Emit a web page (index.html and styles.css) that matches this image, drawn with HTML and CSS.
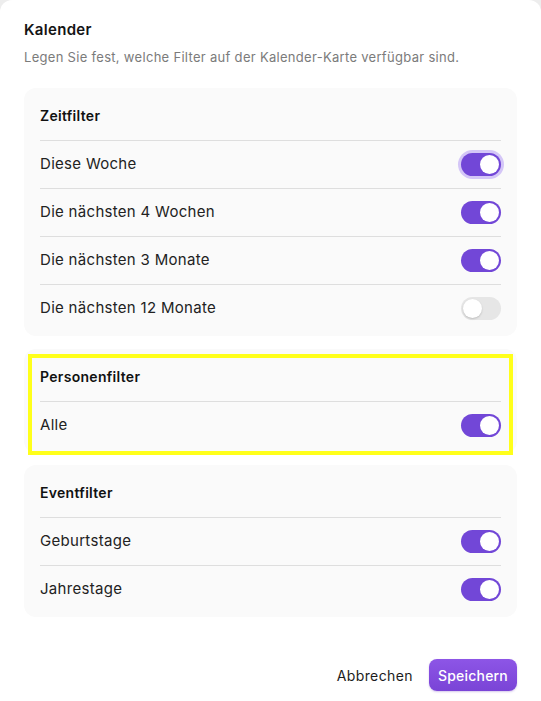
FILE: index.html
```html
<!DOCTYPE html>
<html lang="de">
<head>
<meta charset="utf-8">
<title>Kalender</title>
<link rel="stylesheet" href="styles.css">
</head>
<body>
<div class="dialog">
  <h1 class="title">Kalender</h1>
  <p class="subtitle">Legen Sie fest, welche Filter auf der Kalender-Karte verfügbar sind.</p>

  <div class="sections">
    <section class="card">
      <h2 class="card-title">Zeitfilter</h2>
      <div class="row"><span>Diese Woche</span><span class="toggle on focus"></span></div>
      <div class="row"><span>Die nächsten 4 Wochen</span><span class="toggle on"></span></div>
      <div class="row"><span>Die nächsten 3 Monate</span><span class="toggle on"></span></div>
      <div class="row"><span>Die nächsten 12 Monate</span><span class="toggle"></span></div>
    </section>

    <section class="card highlighted">
      <h2 class="card-title">Personenfilter</h2>
      <div class="row"><span>Alle</span><span class="toggle on"></span></div>
    </section>

    <section class="card">
      <h2 class="card-title">Eventfilter</h2>
      <div class="row"><span>Geburtstage</span><span class="toggle on"></span></div>
      <div class="row"><span>Jahrestage</span><span class="toggle on"></span></div>
    </section>
  </div>

  <div class="footer">
    <button class="btn btn-ghost">Abbrechen</button>
    <button class="btn btn-primary">Speichern</button>
  </div>
</div>
</body>
</html>
```

FILE: styles.css
```css
* { box-sizing: border-box; }

html, body {
  margin: 0;
  padding: 0;
  background: #ededed;
}

body {
  font-family: Inter, "Noto Sans", "Liberation Sans", sans-serif;
  color: #1c1c1c;
  letter-spacing: 0.3px;
}

.dialog {
  background: #ffffff;
  border-radius: 12px;
  min-height: 760px;
  padding: 20px 24px 24px;
}

.title {
  margin: 0;
  font-size: 15px;
  line-height: 20px;
  font-weight: 600;
  color: #141414;
}

.subtitle {
  margin: 7px 0 0;
  font-size: 13px;
  line-height: 20px;
  color: #7b7b7b;
}

.sections {
  margin-top: 21px;
  display: flex;
  flex-direction: column;
  gap: 12px;
}

.card {
  background: #fafafa;
  border-radius: 12px;
  padding: 4px 16px;
}

.card.highlighted {
  position: relative;
  margin-top: 1px;
}

.card.highlighted::after {
  content: "";
  position: absolute;
  left: 4px;
  right: 4px;
  top: 5px;
  bottom: -2px;
  border: 4px solid #ffff1a;
  pointer-events: none;
}

.card-title {
  margin: 0;
  height: 48px;
  padding-bottom: 2px;
  display: flex;
  align-items: center;
  font-size: 14px;
  font-weight: 600;
  color: #111;
}

.row {
  height: 48px;
  border-top: 1px solid #dedede;
  display: flex;
  align-items: center;
  justify-content: space-between;
  font-size: 15px;
  color: #222;
}

.row > span:first-child {
  padding-bottom: 3px;
}

.toggle {
  position: relative;
  width: 40px;
  height: 23px;
  border-radius: 12px;
  background: #e6e6e6;
  flex: none;
}

.toggle::after {
  content: "";
  position: absolute;
  top: 2px;
  left: 2px;
  width: 19px;
  height: 19px;
  border-radius: 50%;
  background: #fff;
  box-shadow: 0 1px 2px rgba(0,0,0,0.18);
}

.toggle.on {
  background: #7247d7;
}

.toggle.on::after {
  left: 19px;
  box-shadow: none;
}

.toggle.focus {
  box-shadow: 0 0 0 3px #d4c6f7;
}

.footer {
  margin-top: 42px;
  display: flex;
  justify-content: flex-end;
  align-items: center;
  gap: 6px;
}

.btn {
  font-family: Inter, "Noto Sans", "Liberation Sans", sans-serif;
  font-size: 14px;
  font-weight: 500;
  letter-spacing: 0.2px;
  border: none;
  height: 32px;
  border-radius: 8px;
  padding: 0 10px;
  cursor: pointer;
}

.btn-ghost {
  background: transparent;
  color: #1c1c1c;
  font-weight: 400;
  letter-spacing: 0.4px;
}

.btn-primary {
  background: linear-gradient(180deg, #8d55e6 0%, #7a44d6 100%);
  color: #fff;
  width: 88px;
  padding: 0;
  box-shadow: 0 1px 2px rgba(90, 40, 180, 0.25);
}
```
